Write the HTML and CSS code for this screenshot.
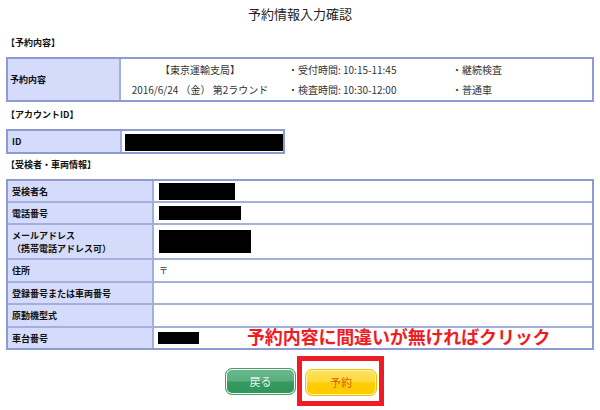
FILE: index.html
```html
<!DOCTYPE html>
<html lang="ja">
<head>
<meta charset="utf-8">
<title>予約情報入力確認</title>
<link rel="stylesheet" href="styles.css">
</head>
<body>
<div class="page">
  <h1 class="title">予約情報入力確認</h1>

  <div class="section-label">【予約内容】</div>
  <div class="box box-reserve">
    <div class="head">予約内容</div>
    <div class="data reserve-grid">
      <div class="c1">【東京運輸支局】</div>
      <div class="c2">・受付時間: 10:15-11:45</div>
      <div class="c3">・継続検査</div>
      <div class="c1">2016/6/24 （金） 第2ラウンド</div>
      <div class="c2">・検査時間: 10:30-12:00</div>
      <div class="c3">・普通車</div>
    </div>
  </div>

  <div class="section-label">【アカウントID】</div>
  <div class="box box-account">
    <div class="head">ID</div>
    <div class="data"><div class="redact redact-id"></div></div>
  </div>

  <div class="section-label tight">【受検者・車両情報】</div>
  <div class="box box-info">
    <div class="head">受検者名</div>
    <div class="data"><div class="redact redact-name"></div></div>
    <div class="head">電話番号</div>
    <div class="data"><div class="redact redact-tel"></div></div>
    <div class="head">メールアドレス<br>（携帯電話アドレス可）</div>
    <div class="data"><div class="redact redact-mail"></div></div>
    <div class="head">住所</div>
    <div class="data">〒</div>
    <div class="head">登録番号または車両番号</div>
    <div class="data"></div>
    <div class="head">原動機型式</div>
    <div class="data"></div>
    <div class="head last">車台番号</div>
    <div class="data last"><div class="redact redact-chassis"></div></div>
    <p class="note">予約内容に間違いが無ければクリック</p>
  </div>

  <div class="actions">
    <button class="btn btn-back" type="button">戻る</button>
    <div class="highlight-wrap">
      <button class="btn btn-reserve" type="button">予約</button>
      <span class="highlight"></span>
    </div>
  </div>
</div>
</body>
</html>
```

FILE: styles.css
```css
* {
  box-sizing: border-box;
  margin: 0;
  padding: 0;
}

html, body {
  background: #ffffff;
}

body {
  width: 600px;
  height: 410px;
  overflow: hidden;
  font-family: "Noto Sans CJK JP", "Noto Sans", sans-serif;
  color: #222222;
}

.page {
  padding: 0 6px;
}

.title {
  height: 30px;
  line-height: 28px;
  text-align: center;
  font-size: 13px;
  font-weight: 400;
  color: #222222;
}

.section-label {
  height: 16px;
  line-height: 16px;
  margin-top: 5px;
  margin-bottom: 6px;
  font-size: 9px;
  font-weight: 700;
  color: #111111;
}

.section-label.tight {
  margin-top: 3px;
}

.box {
  display: grid;
  border: 2px solid #8d9bd0;
}

.head {
  display: flex;
  align-items: center;
  padding-left: 4px;
  background: #d4dbfb;
  border-right: 2px solid #a4afdc;
  font-size: 9px;
  font-weight: 700;
  line-height: 13px;
  color: #111111;
}

.data {
  display: flex;
  align-items: center;
  padding-left: 5px;
  font-size: 9px;
  color: #333333;
  background: #ffffff;
}

.redact {
  background: #000000;
}

/* reservation table */
.box-reserve {
  height: 45px;
  grid-template-columns: 113px 1fr;
}

.box-reserve .head {
  padding-left: 2px;
}

.reserve-grid {
  display: grid;
  grid-template-columns: 158px 164px 1fr;
  grid-auto-rows: 20px;
  align-content: center;
  padding-left: 0;
  font-family: "Liberation Sans Narrow", "Noto Sans CJK JP", sans-serif;
  font-size: 10px;
  line-height: 20px;
}

.reserve-grid .c1 {
  text-align: center;
  white-space: nowrap;
}

.reserve-grid .c2,
.reserve-grid .c3 {
  padding-left: 9px;
  white-space: nowrap;
}

/* account table */
.box-account {
  width: 279px;
  height: 25px;
  grid-template-columns: 114px 1fr;
}

.box-account .head {
  padding-left: 4px;
}

.box-account .data {
  align-items: flex-start;
  padding: 3px 0 0 3px;
}

.redact-id {
  width: 158px;
  height: 17px;
}

/* applicant / vehicle table */
.box-info {
  position: relative;
  grid-template-columns: 146px 1fr;
  grid-template-rows: 22px 22px 35px 23px 22px 23px 20px;
}

.box-info .head,
.box-info .data {
  border-bottom: 2px solid #a4afdc;
}

.box-info .head.last,
.box-info .data.last {
  border-bottom: none;
}

.redact-name {
  width: 76px;
  height: 17px;
}

.redact-tel {
  width: 82px;
  height: 14px;
}

.redact-mail {
  width: 92px;
  height: 23px;
}

.redact-chassis {
  width: 41px;
  height: 12px;
  margin-left: -1px;
}

.note {
  position: absolute;
  left: 239px;
  top: 146px;
  font-size: 18px;
  line-height: 18px;
  font-weight: 700;
  color: #ee1c24;
  white-space: nowrap;
  letter-spacing: -0.15px;
}

/* buttons */
.actions {
  display: flex;
  justify-content: center;
  gap: 9px;
  margin-top: 18px;
  padding-left: 2px;
}

.btn {
  width: 72px;
  height: 27px;
  border-radius: 7px;
  font-family: "Noto Sans CJK JP", "Noto Sans", sans-serif;
  font-size: 11px;
  line-height: 25px;
  text-align: center;
  cursor: pointer;
}

.btn-back {
  width: 71px;
  border: 1px solid #4b9c6d;
  background: linear-gradient(to bottom, #6cba8e 0%, #5aae7e 48%, #36995f 52%, #2e955a 100%);
  box-shadow: inset 0 0 0 1px #f2faf5;
  color: #e4f3ea;
}

.btn-reserve {
  border: 1px solid #f0c200;
  background: linear-gradient(to bottom, #ffe15e 0%, #ffd93c 48%, #ffcd02 52%, #ffcb00 100%);
  box-shadow: inset 0 0 0 1px #fff4b4;
  color: #e05a00;
}

.highlight-wrap {
  position: relative;
}

.highlight {
  position: absolute;
  top: -12px;
  left: -8px;
  right: -7px;
  bottom: -10px;
  border: 5px solid #ee1c24;
  pointer-events: none;
}
```
